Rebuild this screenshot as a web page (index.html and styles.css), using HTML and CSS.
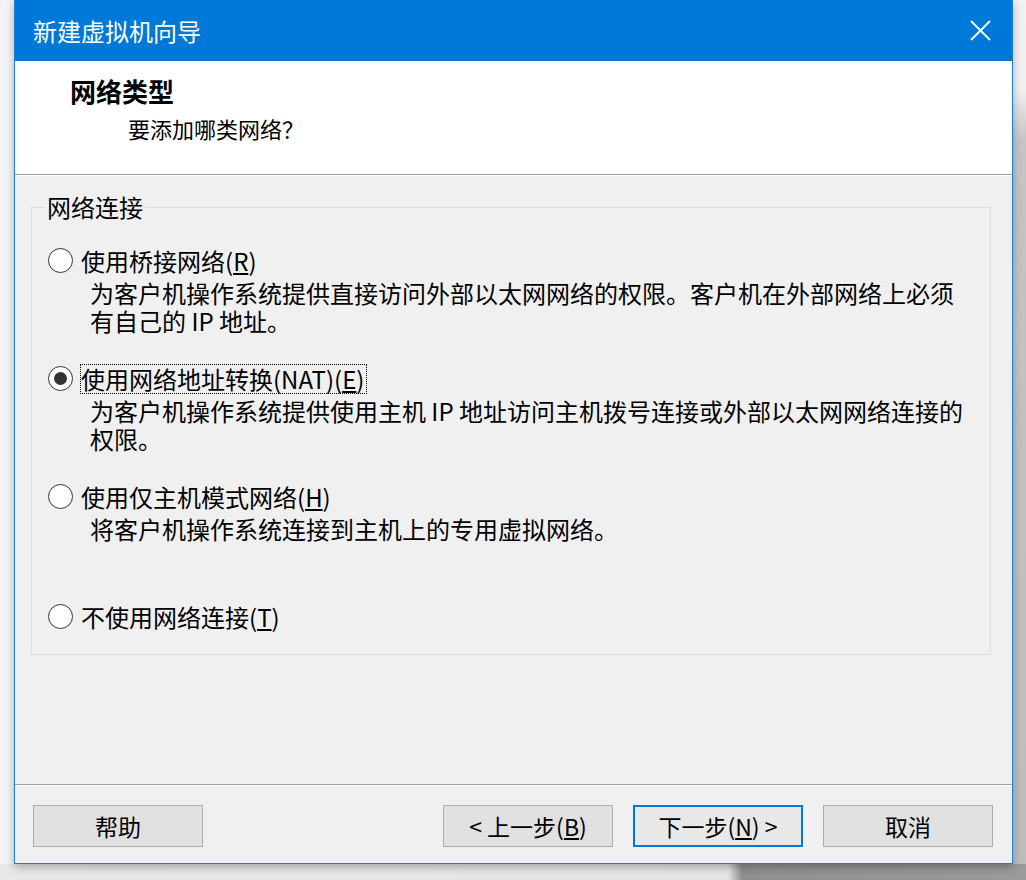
FILE: index.html
```html
<!DOCTYPE html>
<html lang="zh-CN">
<head>
<meta charset="utf-8">
<title>新建虚拟机向导</title>
<link rel="stylesheet" href="styles.css">
</head>
<body>
<div class="window">
  <header class="titlebar">
    <span class="title">新建虚拟机向导</span>
    <svg class="close" width="21" height="21" viewBox="0 0 21 21" aria-label="关闭"><path d="M1 1L20 20M20 1L1 20" stroke="#fff" stroke-width="1.8" fill="none"/></svg>
  </header>
  <div class="banner">
    <h1 class="banner-title">网络类型</h1>
    <p class="banner-sub">要添加哪类网络？</p>
  </div>
  <main class="content">
    <fieldset class="group">
      <legend class="legend">网络连接</legend>
      <div class="option">
        <div class="choice"><span class="radio"></span><span class="label">使用桥接网络(<u>R</u>)</span></div>
        <div class="desc">为客户机操作系统提供直接访问外部以太网网络的权限。客户机在外部网络上必须</div>
        <div class="desc more">有自己的 IP 地址。</div>
      </div>
      <div class="option">
        <div class="choice"><span class="radio checked"></span><span class="label focus">使用网络地址转换(NAT)(<u>E</u>)</span></div>
        <div class="desc">为客户机操作系统提供使用主机 IP 地址访问主机拨号连接或外部以太网网络连接的</div>
        <div class="desc more">权限。</div>
      </div>
      <div class="option">
        <div class="choice"><span class="radio"></span><span class="label">使用仅主机模式网络(<u>H</u>)</span></div>
        <div class="desc">将客户机操作系统连接到主机上的专用虚拟网络。</div>
      </div>
      <div class="option spaced">
        <div class="choice"><span class="radio"></span><span class="label">不使用网络连接(<u>T</u>)</span></div>
      </div>
    </fieldset>
  </main>
  <footer class="actions">
    <button class="btn">帮助</button>
    <button class="btn push">&lt; 上一步(<u>B</u>)</button>
    <button class="btn default">下一步(<u>N</u>) &gt;</button>
    <button class="btn">取消</button>
  </footer>
</div>
</body>
</html>
```
FILE: styles.css
```css
* { box-sizing: border-box; }
html, body { margin: 0; }
body {
  width: 1026px;
  height: 880px;
  overflow: hidden;
  padding-left: 14px;
  font-family: "Noto Sans CJK SC", "Noto Sans", sans-serif;
  color: #000;
  background:
    linear-gradient(to right, #e7e7e7 0, #e4e4e4 728px, #8f8f8f 742px, #9a9a9a 100%) 0 864px / 100% 16px no-repeat,
    linear-gradient(#f3f1f1 0, #f1efef 90px, #c4c4c4 140px, #bcbcbc 100%) 1013px 0 / 13px 880px no-repeat,
    #f3f3f3;
}
.window {
  width: 999px;
  height: 864px;
  border: 1px solid #1a7fd5;
  border-top: 0;
  background: #f0f0f0;
  display: flex;
  flex-direction: column;
  box-shadow: 0 3px 8px rgba(0, 0, 0, 0.28);
}
.titlebar {
  height: 61px;
  flex: none;
  background: #0078d7;
  display: flex;
  align-items: center;
  justify-content: space-between;
  padding: 0 21px 0 18px;
}
.title {
  color: #fff;
  font-size: 24px;
  line-height: 61px;
}
.close { display: block; }
.banner {
  height: 114px;
  flex: none;
  background: #fff;
  border-bottom: 1px solid #a0a0a0;
  padding: 15px 0 0 55px;
}
.banner-title {
  margin: 0;
  font-size: 26px;
  font-weight: bold;
  line-height: 30px;
}
.banner-sub {
  margin: 7px 0 0 58px;
  font-size: 22px;
  line-height: 30px;
}
.content {
  flex: 1;
  border-top: 1px solid #fff;
  padding: 16px 21px 0 16px;
}
.group {
  margin: 0;
  min-width: 0;
  border: 1px solid #dcdcdc;
  padding: 24px 0 22px 16px;
}
.legend {
  padding: 0 2px;
  margin-left: -3px;
  font-size: 24px;
  line-height: 30px;
}
.option + .option { margin-top: 29px; }
.option.spaced { margin-top: 59px; }
.choice {
  display: flex;
  align-items: center;
  height: 30px;
  gap: 7px;
}
.radio {
  width: 25px;
  height: 25px;
  flex: none;
  margin-top: -2px;
  border: 1.5px solid #333;
  border-radius: 50%;
  background: #fff;
  display: flex;
  align-items: center;
  justify-content: center;
}
.radio.checked::after {
  content: "";
  width: 13px;
  height: 13px;
  border-radius: 50%;
  background: #333;
}
.label {
  font-size: 24px;
  line-height: 28px;
  border: 1px dotted transparent;
  padding-right: 2px;
}
.label.focus { border-color: #000; }
.desc {
  margin: 3px 0 0 42px;
  height: 28px;
  font-size: 24px;
  line-height: 28px;
  white-space: nowrap;
}
.desc.more { margin-top: 0; }
.actions {
  flex: none;
  height: 79px;
  border-top: 1px solid #a0a0a0;
  box-shadow: inset 0 1px 0 #fff;
  display: flex;
  gap: 20px;
  padding: 20px 19px 16px 18px;
}
.btn {
  width: 170px;
  height: 42px;
  margin: 0;
  padding: 0;
  border: 1px solid #adadad;
  background: #e1e1e1;
  font-family: "Noto Sans CJK SC", "Noto Sans", sans-serif;
  font-size: 23px;
  line-height: 40px;
  color: #000;
  text-align: center;
}
.btn.push { margin-left: auto; }
.btn.default {
  border: 2px solid #0078d7;
  background: #e8e8e8;
  line-height: 38px;
}
```
